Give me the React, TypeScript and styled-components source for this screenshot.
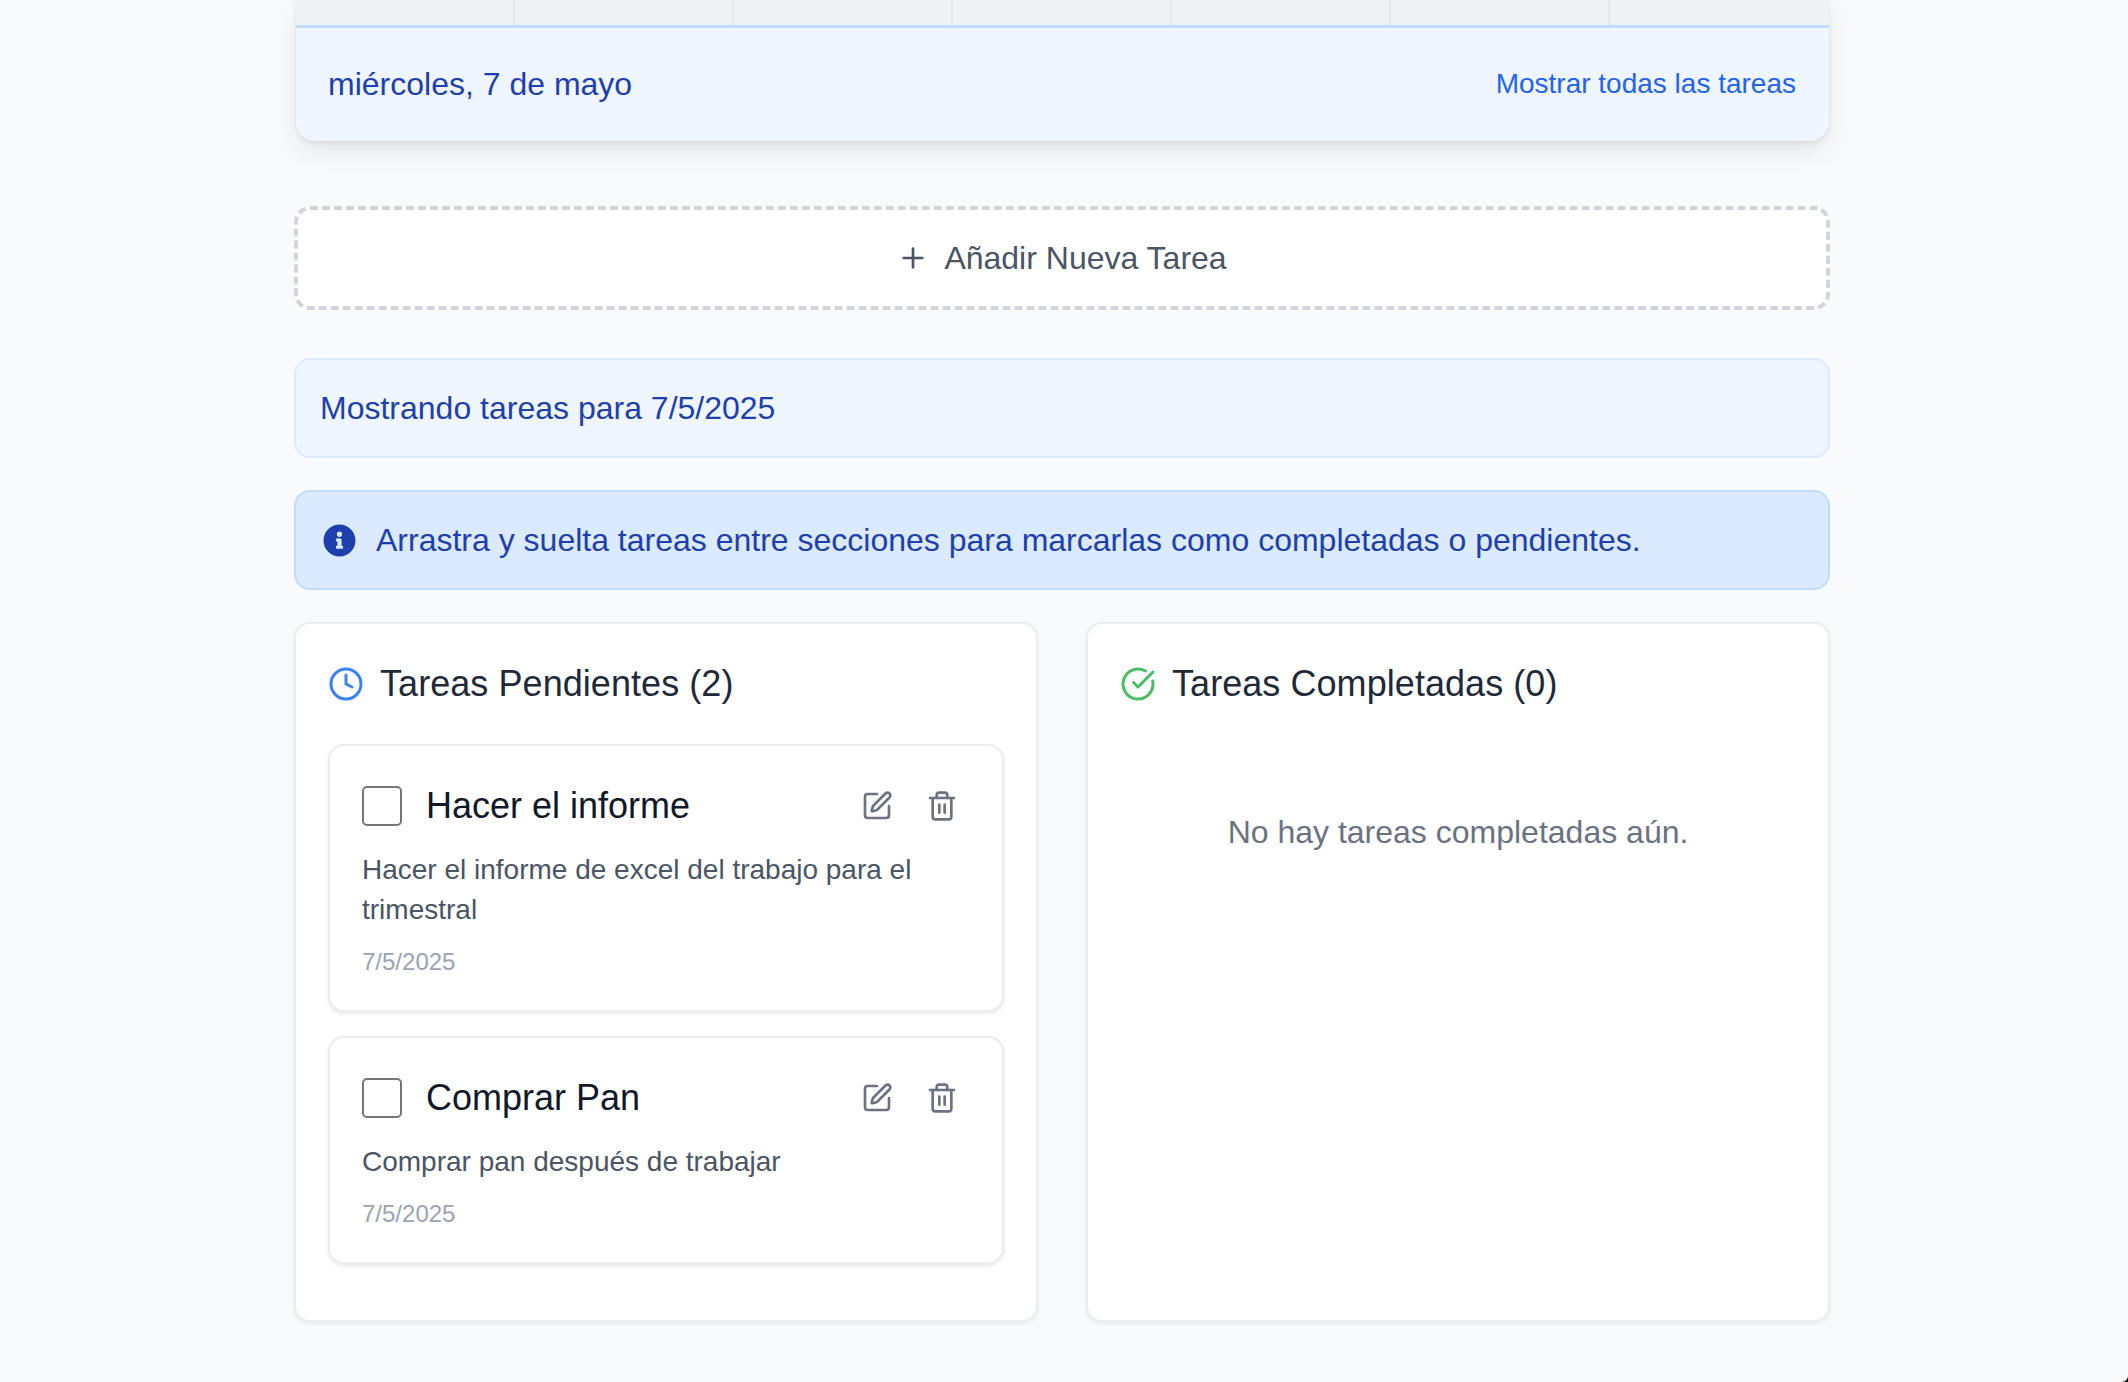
import React from "react";
import styled, { createGlobalStyle } from "styled-components";
import { Plus, Clock, CircleCheckBig, SquarePen, Trash2 } from "lucide-react";
import { FaInfoCircle } from "react-icons/fa";

const Global = createGlobalStyle`
  html, body { margin: 0; padding: 0; height: 100%; overflow: hidden; background: #f9fafb; }
  body { font-family: "Liberation Sans", Arial, sans-serif; }
  * { box-sizing: border-box; }
`;

const Page = styled.div`
  height: 1382px;
  padding: 0 298px 0 294px;
  display: flex;
  flex-direction: column;
`;

const CalendarCard = styled.section`
  margin: 0 1px 0 2px;
  border-radius: 0 0 20px 20px;
  box-shadow: 0 12px 24px rgba(0, 0, 0, 0.08), 0 2px 5px rgba(0, 0, 0, 0.08);
  overflow: hidden;
`;

const WeekRow = styled.div`
  height: 25px;
  display: grid;
  grid-template-columns: repeat(7, 1fr);
  background: #f0f1f3;
`;

const WeekCell = styled.div`
  border-right: 2px solid #e5e7eb;
  &:last-child { border-right: 0; }
`;

const SelectedBar = styled.div`
  height: 116px;
  border-top: 3px solid #bfdbfe;
  background: #eff6ff;
  padding: 0 33px 0 32px;
  display: flex;
  align-items: center;
  justify-content: space-between;
`;

const SelectedDate = styled.span`
  font-size: 32px;
  color: #1e40af;
`;

const ShowAll = styled.a`
  padding-bottom: 2px;
  font-size: 28px;
  color: #2563eb;
`;

const AddButton = styled.button`
  margin-top: 65px;
  height: 104px;
  border: 4px dashed #d1d5db;
  border-radius: 16px;
  background: #fff;
  font: inherit;
  font-size: 32px;
  color: #4b5563;
  display: flex;
  align-items: center;
  justify-content: center;
  gap: 15px;
`;

const Notice = styled.div<{ $strong?: boolean }>`
  height: 100px;
  border: 2px solid ${(p) => (p.$strong ? "#bfdbfe" : "#dbeafe")};
  border-radius: 16px;
  background: ${(p) => (p.$strong ? "#dbeafe" : "#eff6ff")};
  color: #1e40af;
  font-size: 32px;
  display: flex;
  align-items: center;
  gap: 20px;
  padding-left: ${(p) => (p.$strong ? "27px" : "24px")};
  margin-top: ${(p) => (p.$strong ? "32px" : "48px")};
`;

const Columns = styled.div`
  margin-top: 32px;
  height: 700px;
  display: grid;
  grid-template-columns: 1fr 1fr;
  gap: 48px;
`;

const Panel = styled.section`
  border-radius: 16px;
  background: #fff;
  border: 2px solid #ebecef;
  box-shadow: 0 2px 4px rgba(0, 0, 0, 0.07);
  padding: 32px;
`;

const PanelTitle = styled.h2<{ $tint: string }>`
  margin: 0;
  height: 56px;
  display: flex;
  align-items: center;
  gap: 16px;
  font-size: 36px;
  font-weight: 400;
  line-height: 56px;
  letter-spacing: 0.06px;
  color: #1f2937;
  svg { color: ${(p) => p.$tint}; flex: none; }
`;

const TaskList = styled.div`
  margin-top: 32px;
  display: flex;
  flex-direction: column;
  gap: 24px;
`;

const TaskCard = styled.article`
  border-radius: 16px;
  background: #fff;
  border: 2px solid #ebecef;
  box-shadow: 0 2px 4px rgba(0, 0, 0, 0.09);
  padding: 32px;
`;

const TaskHead = styled.div`
  display: flex;
  align-items: center;
  height: 56px;
`;

const Check = styled.span`
  width: 40px;
  height: 40px;
  flex: none;
  border: 2px solid #767676;
  border-radius: 5px;
  background: #fff;
`;

const TaskTitle = styled.h3`
  margin: 0 0 0 24px;
  flex: 1;
  font-size: 36px;
  font-weight: 400;
  line-height: 56px;
  color: #111827;
`;

const Actions = styled.div`
  display: flex;
  margin-right: 12px;
`;

const IconBtn = styled.button`
  width: 32px;
  height: 32px;
  padding: 0;
  margin-left: 33px;
  border: 0;
  background: none;
  color: #6b7280;
  display: block;
`;

const TaskDesc = styled.p`
  margin: 16px 0 0;
  font-size: 28px;
  line-height: 40px;
  color: #4b5563;
`;

const TaskDate = styled.div`
  margin-top: 16px;
  font-size: 24px;
  line-height: 32px;
  color: #9ca3af;
`;

const Empty = styled.p`
  margin: 96px 0 0;
  text-align: center;
  font-size: 32px;
  line-height: 48px;
  color: #6b7280;
`;

const WindowCorner = styled.svg`
  position: fixed;
  right: 0;
  bottom: 0;
  display: block;
`;

const tasks = [
  { title: "Hacer el informe", desc: "Hacer el informe de excel del trabajo para el trimestral" },
  { title: "Comprar Pan", desc: "Comprar pan después de trabajar" },
];

export default function App() {
  return (
    <>
      <Global />
      <Page>
        <CalendarCard>
          <WeekRow>
            {Array.from({ length: 7 }, (_, i) => (
              <WeekCell key={i} />
            ))}
          </WeekRow>
          <SelectedBar>
            <SelectedDate>miércoles, 7 de mayo</SelectedDate>
            <ShowAll>Mostrar todas las tareas</ShowAll>
          </SelectedBar>
        </CalendarCard>

        <AddButton>
          <Plus size={32} strokeWidth={2} />
          Añadir Nueva Tarea
        </AddButton>

        <Notice>Mostrando tareas para 7/5/2025</Notice>
        <Notice $strong>
          <FaInfoCircle size={33} />
          Arrastra y suelta tareas entre secciones para marcarlas como completadas o pendientes.
        </Notice>

        <Columns>
          <Panel>
            <PanelTitle $tint="#3b82f6">
              <Clock size={36} />
              Tareas Pendientes (2)
            </PanelTitle>
            <TaskList>
              {tasks.map((t) => (
                <TaskCard key={t.title}>
                  <TaskHead>
                    <Check />
                    <TaskTitle>{t.title}</TaskTitle>
                    <Actions>
                      <IconBtn><SquarePen size={32} /></IconBtn>
                      <IconBtn><Trash2 size={32} /></IconBtn>
                    </Actions>
                  </TaskHead>
                  <TaskDesc>{t.desc}</TaskDesc>
                  <TaskDate>7/5/2025</TaskDate>
                </TaskCard>
              ))}
            </TaskList>
          </Panel>
          <Panel>
            <PanelTitle $tint="#4bbd63">
              <CircleCheckBig size={36} />
              Tareas Completadas (0)
            </PanelTitle>
            <Empty>No hay tareas completadas aún.</Empty>
          </Panel>
        </Columns>
      </Page>
      <WindowCorner width="6" height="6" viewBox="0 0 6 6">
        <path d="M6 0V6H0A6 6 0 0 0 6 0Z" fill="#000" />
      </WindowCorner>
    </>
  );
}
